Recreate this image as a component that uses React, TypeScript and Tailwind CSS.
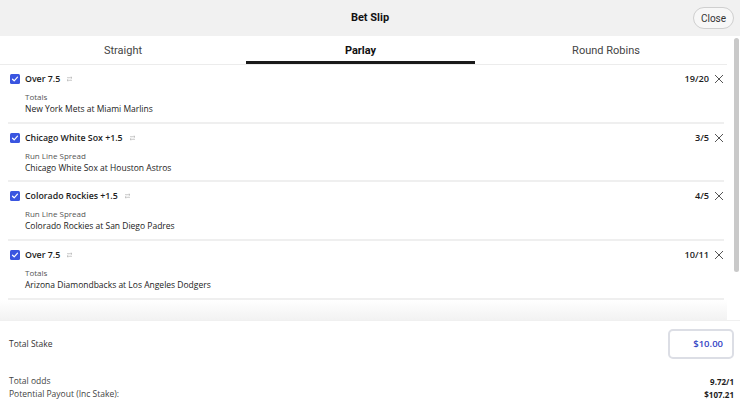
import React from "react";

const bets = [
  { title: "Over 7.5", market: "Totals", game: "New York Mets at Miami Marlins", odds: "19/20" },
  { title: "Chicago White Sox +1.5", market: "Run Line Spread", game: "Chicago White Sox at Houston Astros", odds: "3/5" },
  { title: "Colorado Rockies +1.5", market: "Run Line Spread", game: "Colorado Rockies at San Diego Padres", odds: "4/5" },
  { title: "Over 7.5", market: "Totals", game: "Arizona Diamondbacks at Los Angeles Dodgers", odds: "10/11" },
];

function Check() {
  return (
    <div className="w-[10px] h-[10px] rounded-[1.5px] bg-[#3a55e0] flex items-center justify-center shrink-0">
      <svg width="8" height="8" viewBox="0 0 8 8">
        <path d="M1.5 4.2 L3.2 5.8 L6.5 2.2" fill="none" stroke="white" strokeWidth="1.2" strokeLinecap="round" strokeLinejoin="round" />
      </svg>
    </div>
  );
}

function Swap() {
  return (
    <svg width="7" height="6" viewBox="0 0 7 6" className="ml-[6px]">
      <path d="M1 1.7 H6 M4.8 0.6 L6 1.7 L4.8 2.8 M6 4.3 H1 M2.2 3.2 L1 4.3 L2.2 5.4" fill="none" stroke="#b5b5b5" strokeWidth="0.7" />
    </svg>
  );
}

function Cross() {
  return (
    <svg width="10" height="10" viewBox="0 0 10 10" className="ml-[5px]">
      <path d="M1 1 L9 9 M9 1 L1 9" stroke="#555" strokeWidth="1" />
    </svg>
  );
}

export default function App() {
  const body = { fontFamily: "'Open Sans', 'Liberation Sans', sans-serif" };
  const cond = { fontFamily: "'Liberation Sans Narrow', Roboto, 'Liberation Sans', sans-serif" };
  return (
    <div className="w-[740px] h-[408px] overflow-hidden bg-white flex flex-col text-[#1c1c1c]" style={body}>
      <div className="h-[36px] shrink-0 bg-[#f1f1f1] grid grid-cols-[1fr_auto_1fr] items-center">
        <div />
        <div className="text-[11px] font-bold text-[#111]" style={cond}>Bet Slip</div>
        <div className="flex justify-end pr-[6px]">
          <div className="h-[22px] w-[41px] rounded-full border border-[#cfcfcf] bg-[#f7f7f7] flex items-center justify-center text-[10px] text-[#333]" style={cond}>
            Close
          </div>
        </div>
      </div>
      <div className="flex flex-1 min-h-0">
        <div className="w-[727px] flex flex-col">
          <div className="h-[29px] shrink-0 flex border-b border-[#ececec] text-[11px]" style={cond}>
            <div className="w-[246px] flex items-center justify-center text-[#444] pt-[3px]">Straight</div>
            <div className="w-[229px] flex items-center justify-center font-bold text-[#111] border-b-[3px] border-[#1a1a1a] pt-[5px]">Parlay</div>
            <div className="flex-1 flex items-center justify-center text-[#444] pl-[10px] pt-[3px]">Round Robins</div>
          </div>
          <div className="pl-[8px] pr-[3px]">
            {bets.map((b, i) => (
              <div key={i} className="h-[58.7px] border-b-2 border-[#efefef] flex flex-col">
                <div className="mt-[8px] h-[12px] flex items-center">
                  <div className="ml-[2px]"><Check /></div>
                  <span className="ml-[5px] text-[8.8px] font-semibold leading-[12px]">{b.title}</span>
                  <Swap />
                  <div className="flex-1" />
                  <span className="text-[9.2px] font-semibold leading-[12px]">{b.odds}</span>
                  <Cross />
                </div>
                <div className="mt-[6px] pl-[17px] text-[8px] leading-[12px] text-[#555]">{b.market}</div>
                <div className="pl-[17px] text-[8.5px] leading-[12px] text-[#222]">{b.game}</div>
              </div>
            ))}
          </div>
          <div className="flex-1 bg-gradient-to-b from-white to-[#f2f2f2]" />
        </div>
        <div className="w-[13px] flex">
          <div className="w-[7px] bg-white" />
          <div className="w-[5px] pt-[2px] pb-[48px] flex">
            <div className="w-full rounded-full bg-[#c9c9c9]" />
          </div>
        </div>
      </div>
      <div className="h-[88px] shrink-0 bg-white border-t border-[#f0f0f0] px-[9px] pr-[6px] pt-[8px]">
        <div className="flex items-center justify-between h-[30px]">
          <span className="text-[8.5px] text-[#333]">Total Stake</span>
          <div className="w-[66px] h-[30px] rounded-[5px] border-2 border-[#dcdee5] flex items-center justify-end pr-[9px] text-[9.5px] font-semibold text-[#3343c4]">
            $10.00
          </div>
        </div>
        <div className="mt-[16px] flex justify-between items-center h-[13px]">
          <span className="text-[8.5px] text-[#444]">Total odds</span>
          <span className="text-[8px] font-bold">9.72/1</span>
        </div>
        <div className="flex justify-between items-center h-[13px]">
          <span className="text-[8.5px] text-[#444]">Potential Payout (Inc Stake):</span>
          <span className="text-[8px] font-bold">$107.21</span>
        </div>
      </div>
    </div>
  );
}
